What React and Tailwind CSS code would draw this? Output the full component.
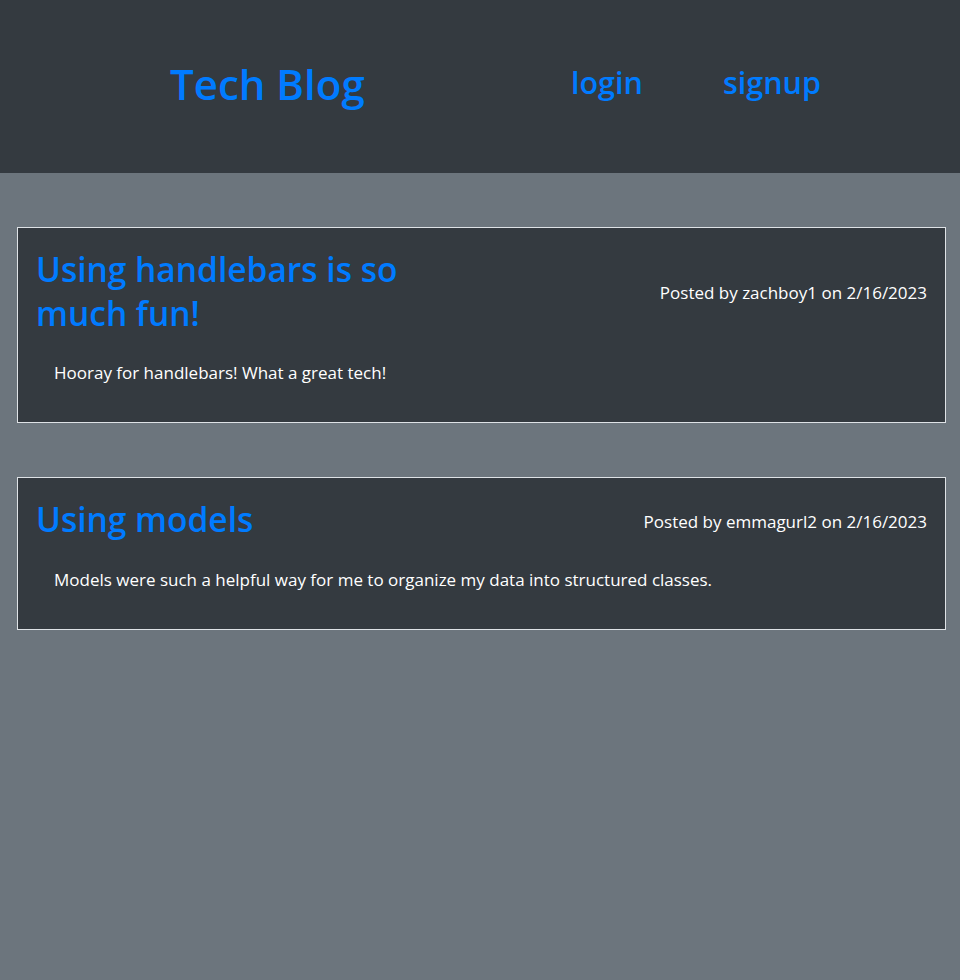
import React from 'react';

const posts = [
  {
    id: 1,
    title: 'Using handlebars is so much fun!',
    author: 'zachboy1',
    date: '2/16/2023',
    body: 'Hooray for handlebars! What a great tech!',
  },
  {
    id: 2,
    title: 'Using models',
    author: 'emmagurl2',
    date: '2/16/2023',
    body: 'Models were such a helpful way for me to organize my data into structured classes.',
  },
];

const PostCard = ({ post }) => (
  <div className="ml-[17px] mr-[14px] border border-[#dee2e6] bg-[#343a40] px-[18px] pt-[20px] pb-[37px]">
    <div className="flex items-center justify-between">
      <h2 className="max-w-[420px] text-[33.5px] leading-[43.7px] font-semibold text-[#007bff]">{post.title}</h2>
      <p className="mt-[2px] text-[17px] text-white">Posted by {post.author} on {post.date}</p>
    </div>
    <p className="mt-[26px] px-[18px] text-[17px] leading-6 text-white">{post.body}</p>
  </div>
);

export default function App() {
  return (
    <div className="min-h-[980px] bg-[#6c757d] font-['Open_Sans',sans-serif]">
      <header className="flex h-[173px] items-center bg-[#343a40] pl-[170px]">
        <h1 className="mb-[4px] w-[401px] text-[42px] leading-[1.2] font-semibold text-[#007bff]">Tech Blog</h1>
        <nav className="mb-[9px] flex gap-[80px] text-[30.5px] leading-[1.2] font-semibold text-[#007bff]">
          <a href="#">login</a>
          <a href="#">signup</a>
        </nav>
      </header>
      <main className="flex flex-col gap-[54px] pt-[54px]">
        {posts.map(post => (
          <PostCard key={post.id} post={post} />
        ))}
      </main>
    </div>
  );
}
